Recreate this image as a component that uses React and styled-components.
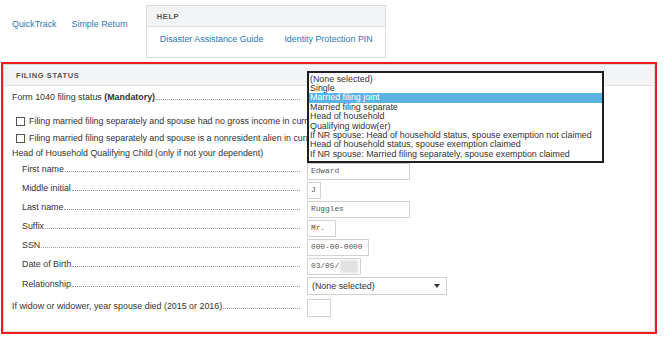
import React from "react";
import styled, { createGlobalStyle } from "styled-components";

const GlobalStyle = createGlobalStyle`
  html, body {
    margin: 0;
    padding: 0;
    background: #fff;
  }
  body {
    font-family: "Liberation Sans", Arial, sans-serif;
    font-size: 8.9px;
    color: #333;
  }
`;

const TopBar = styled.div`
  display: flex;
  align-items: flex-start;
  padding: 5px 0 0 12px;
`;

const NavLinks = styled.div`
  display: flex;
  gap: 15px;
  padding-top: 14px;
  line-height: 11px;
  margin-right: 18px;
`;

const NavLink = styled.a`
  color: #2c78b5;
  text-decoration: none;
  font-size: 8.9px;
`;

const HelpBox = styled.div`
  box-sizing: border-box;
  width: 240px;
  height: 53px;
  border: 1px solid #dcdcdc;
`;

const BoxHeader = styled.div`
  box-sizing: border-box;
  height: ${(p) => p.$h}px;
  background: #f3f4f5;
  border-bottom: 1px solid #e2e2e2;
  padding-left: ${(p) => p.$pad}px;
  display: flex;
  align-items: center;
  font-size: 7.5px;
  font-weight: bold;
  letter-spacing: 0.6px;
  color: #555;
  text-transform: uppercase;
`;

const HelpLinks = styled.div`
  display: flex;
  gap: 21px;
  padding: 7px 0 0 13px;
  line-height: 11px;
`;

const ErrorFrame = styled.div`
  box-sizing: border-box;
  margin: 4px 0 0 1px;
  width: 656px;
  border: 2px solid #f01c1c;
`;

const Panel = styled.div`
  border: 1px solid #d9d9e2;
  overflow: hidden;
`;

const PanelBody = styled.div`
  padding: 2px 0 14px 8px;
`;

const Row = styled.div`
  display: flex;
  align-items: center;
  height: ${(p) => p.$h || 19}px;
  padding-left: ${(p) => (p.$indent ? 10 : 0)}px;
  white-space: nowrap;
`;

const Label = styled.div`
  display: flex;
  align-items: baseline;
  width: ${(p) => (p.$indent ? 278 : 288)}px;
  line-height: 11px;
`;

const Leader = styled.span`
  flex: 1;
  height: 1px;
  margin-left: 1px;
  border-bottom: 1px dotted #9a9a9a;
`;

const Field = styled.div`
  position: relative;
  margin-left: 7px;
  display: flex;
  align-items: center;
  margin-top: ${(p) => p.$shift || 0}px;
`;

const CheckRows = styled.div`
  margin-top: 6px;
`;

const CheckRow = styled.div`
  display: flex;
  align-items: center;
  height: 17px;
  padding-left: 4px;
  white-space: nowrap;
  line-height: 11px;
`;

const Box = styled.span`
  box-sizing: border-box;
  width: 9px;
  height: 9px;
  border: 1px solid #555;
  background: #fff;
  margin-right: 4px;
`;

const Input = styled.div`
  box-sizing: border-box;
  width: ${(p) => p.$w}px;
  height: ${(p) => p.$h || 17}px;
  border: 1px solid #d2d2d2;
  padding-left: 3px;
  display: flex;
  align-items: center;
  font-family: "Liberation Mono", "Courier New", monospace;
  font-size: 7.8px;
  color: #555;
`;

const Redacted = styled.span`
  display: inline-block;
  width: 18px;
  height: 13px;
  margin-left: 1px;
  background: #e2e2e2;
  filter: blur(1px);
`;

const SelectBox = styled.div`
  box-sizing: border-box;
  width: 140px;
  height: 18px;
  border: 1px solid #cfcfcf;
  padding: 0 6px 0 4px;
  display: flex;
  align-items: center;
  justify-content: space-between;
  color: #333;
`;

const Caret = styled.span`
  width: 0;
  height: 0;
  border-left: 3.5px solid transparent;
  border-right: 3.5px solid transparent;
  border-top: 4px solid #333;
`;

const ListBox = styled.ul`
  position: absolute;
  top: -27px;
  left: 0;
  z-index: 2;
  box-sizing: border-box;
  width: 297px;
  height: 92px;
  margin: 0;
  padding: 2px 0 0;
  list-style: none;
  background: #fff;
  border: 2px solid #1f1f1f;
  font-size: 8.9px;
  line-height: 9.4px;
  color: #333;
`;

const Option = styled.li`
  padding-left: 1px;
  background: ${(p) => (p.$active ? "#5ab3e3" : "transparent")};
  color: ${(p) => (p.$active ? "#fff" : "#333")};
`;

const options = [
  "(None selected)",
  "Single",
  "Married filing joint",
  "Married filing separate",
  "Head of household",
  "Qualifying widow(er)",
  "If NR spouse: Head of household status, spouse exemption not claimed",
  "Head of household status, spouse exemption claimed",
  "If NR spouse: Married filing separately, spouse exemption claimed",
];

const childFields = [
  { label: "First name", value: "Edward", w: 103 },
  { label: "Middle initial", value: "J", w: 14 },
  { label: "Last name", value: "Ruggles", w: 103 },
  { label: "Suffix", value: "Mr.", w: 29 },
  { label: "SSN", value: "000-00-0000", w: 62 },
  { label: "Date of Birth", value: "03/05/", w: 54, redacted: true },
];

export default function App() {
  return (
    <>
      <GlobalStyle />
      <TopBar>
        <NavLinks>
          <NavLink href="#">QuickTrack</NavLink>
          <NavLink href="#">Simple Return</NavLink>
        </NavLinks>
        <HelpBox>
          <BoxHeader $h={21} $pad={10}>Help</BoxHeader>
          <HelpLinks>
            <NavLink href="#">Disaster Assistance Guide</NavLink>
            <NavLink href="#">Identity Protection PIN</NavLink>
          </HelpLinks>
        </HelpBox>
      </TopBar>

      <ErrorFrame>
        <Panel>
          <BoxHeader $h={21} $pad={12}>Filing Status</BoxHeader>
          <PanelBody>
            <Row>
              <Label>
                <span>
                  Form 1040 filing status <b>(Mandatory)</b>
                </span>
                <Leader />
              </Label>
              <Field>
                <ListBox>
                  {options.map((o, i) => (
                    <Option key={o} $active={i === 2}>
                      {o}
                    </Option>
                  ))}
                </ListBox>
              </Field>
            </Row>

            <CheckRows>
              <CheckRow>
                <Box />
                Filing married filing separately and spouse had no gross income in curr
              </CheckRow>
              <CheckRow>
                <Box />
                Filing married filing separately and spouse is a nonresident alien in curr
              </CheckRow>
            </CheckRows>

            <Row $h={13}>
              <Label>
                <span>Head of Household Qualifying Child (only if not your dependent)</span>
              </Label>
            </Row>

            {childFields.map((f) => (
              <Row key={f.label} $indent>
                <Label $indent>
                  <span>{f.label}</span>
                  <Leader />
                </Label>
                <Field $shift={3}>
                  <Input $w={f.w}>
                    {f.value}
                    {f.redacted && <Redacted />}
                  </Input>
                </Field>
              </Row>
            ))}

            <Row $indent $h={21}>
              <Label $indent>
                <span>Relationship</span>
                <Leader />
              </Label>
              <Field $shift={3}>
                <SelectBox>
                  (None selected)
                  <Caret />
                </SelectBox>
              </Field>
            </Row>

            <Row $h={22}>
              <Label>
                <span>If widow or widower, year spouse died (2015 or 2016)</span>
                <Leader />
              </Label>
              <Field $shift={3}>
                <Input $w={24} $h={18} />
              </Field>
            </Row>
          </PanelBody>
        </Panel>
      </ErrorFrame>
    </>
  );
}
